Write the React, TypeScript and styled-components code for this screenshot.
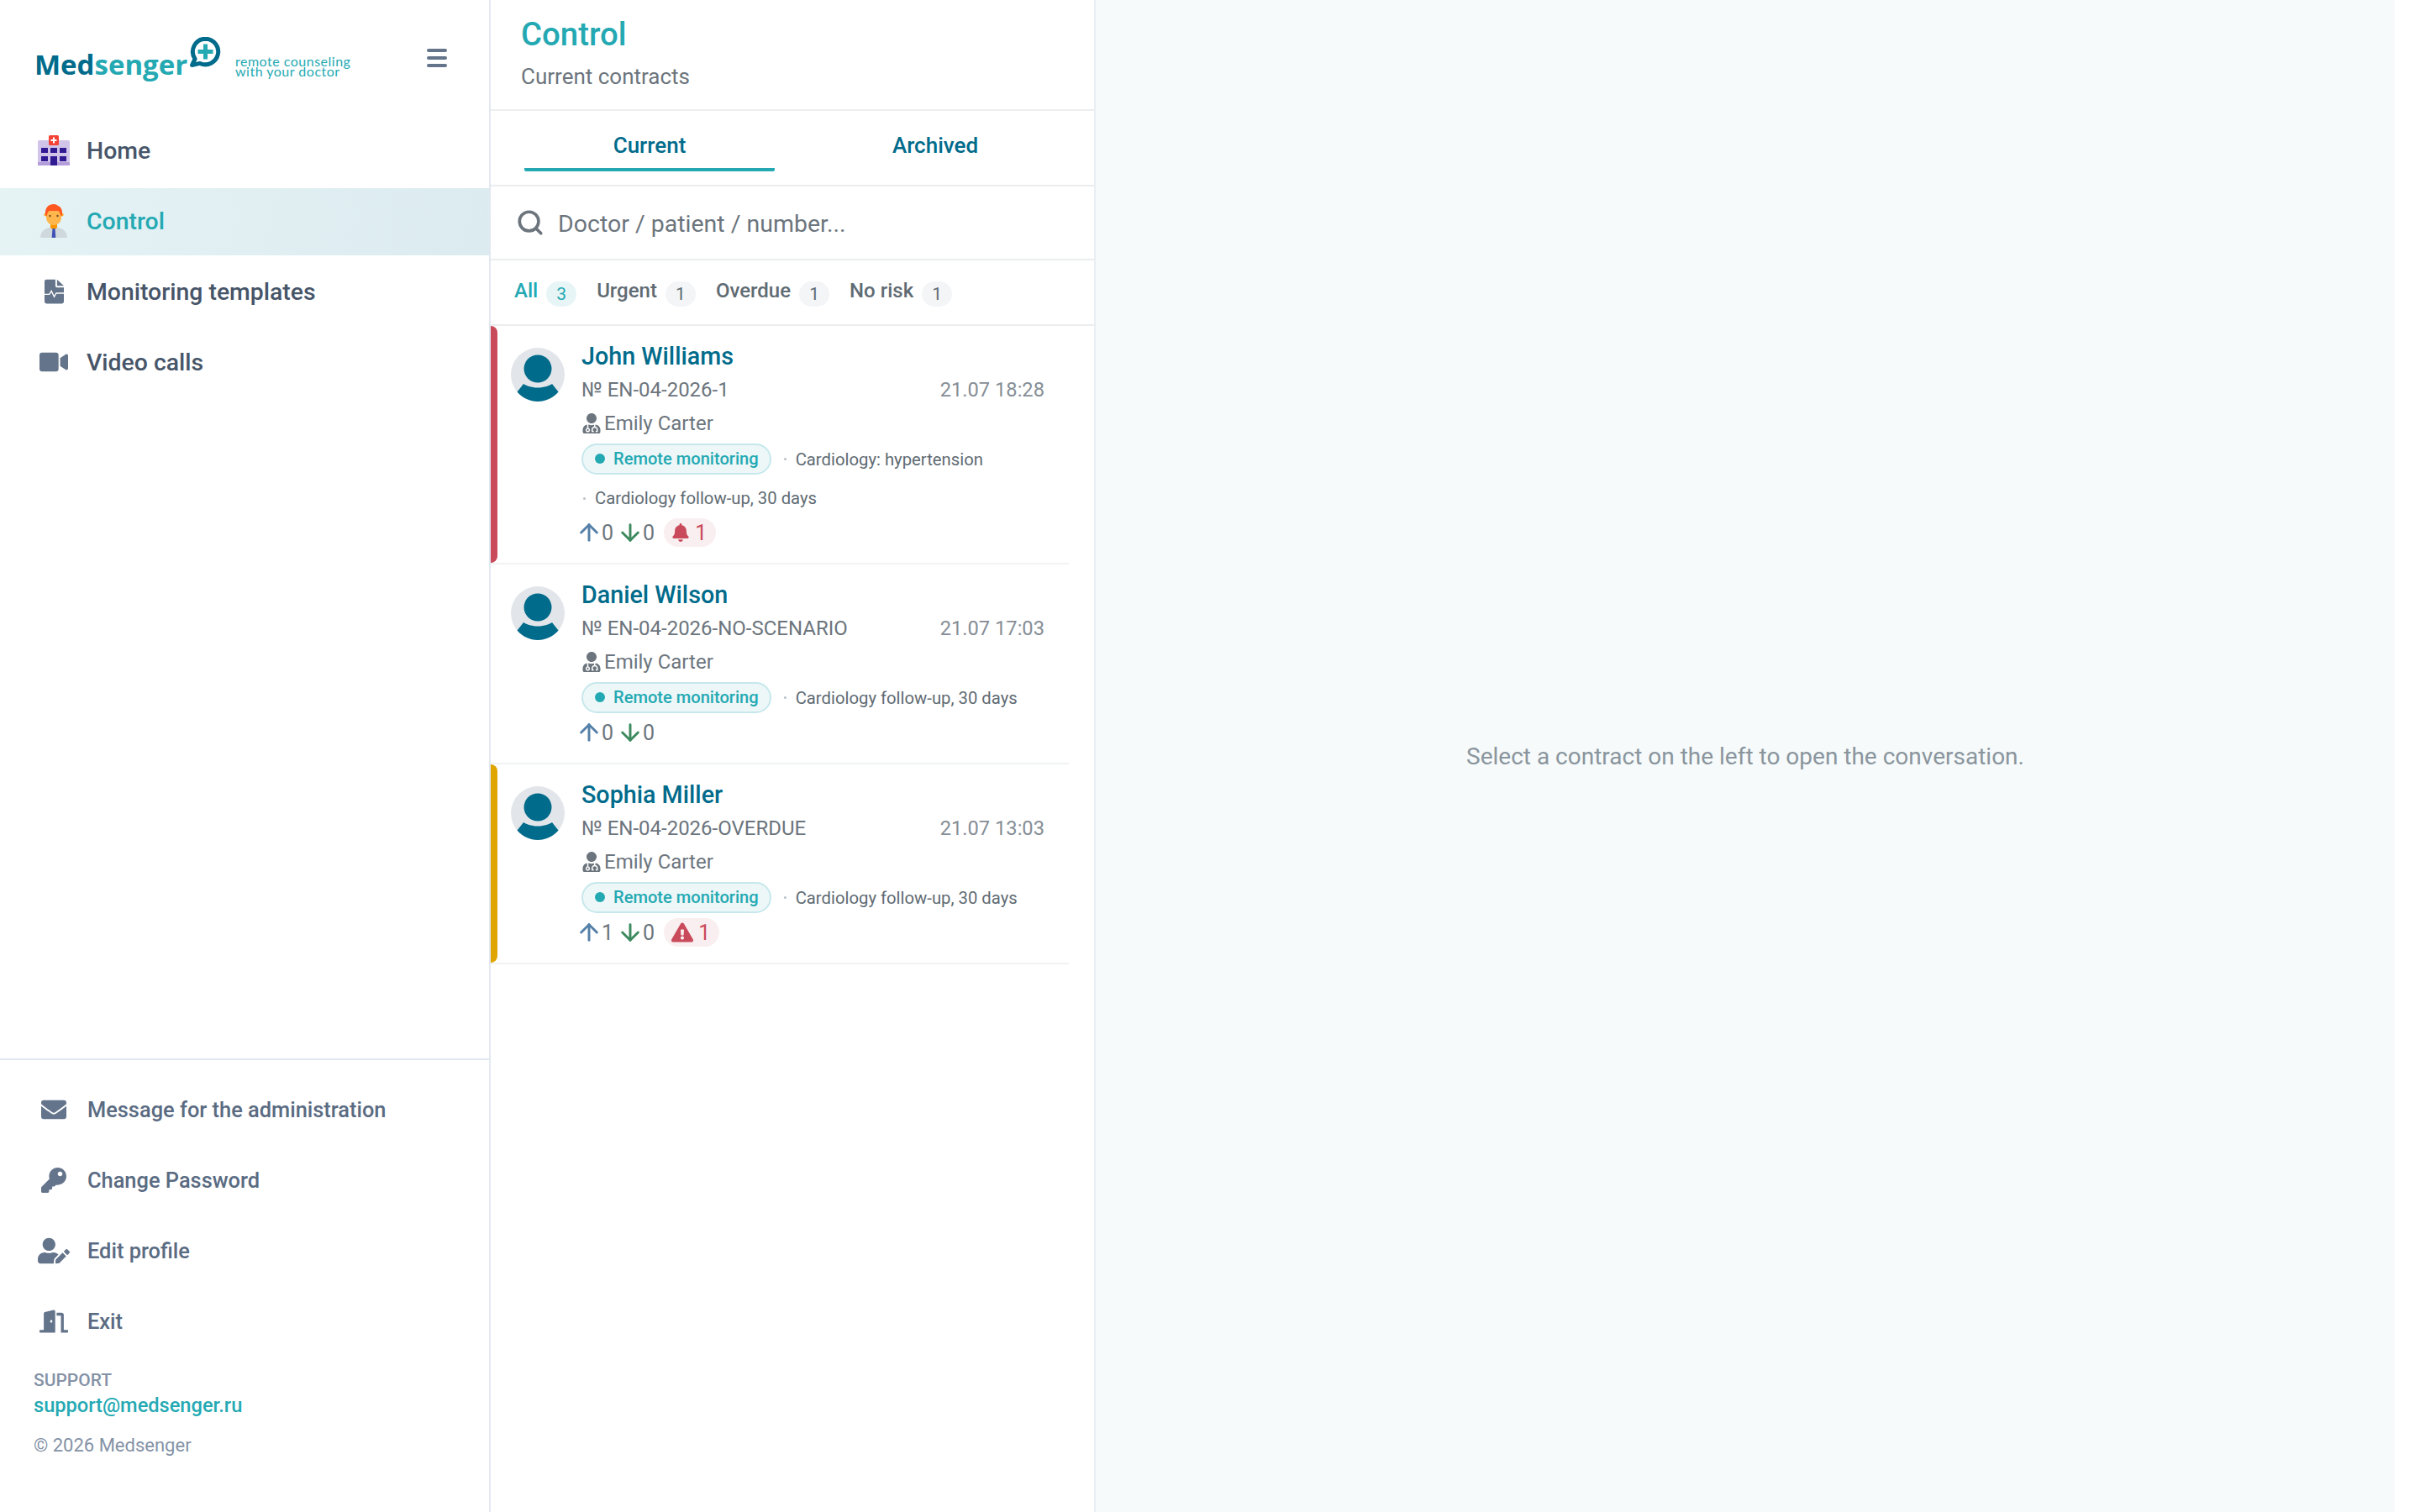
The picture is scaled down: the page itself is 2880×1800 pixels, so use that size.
import React from "react";
import styled, { createGlobalStyle } from "styled-components";
import { ArrowDown, ArrowUp, Search } from "lucide-react";
import {
  FaBell,
  FaDoorOpen,
  FaEnvelope,
  FaExclamationTriangle,
  FaKey,
  FaUserEdit,
  FaUserMd,
  FaVideo,
} from "react-icons/fa";

const TEAL = "#24a9b3";
const DEEP = "#006b8b";
const ROBOTO = `Roboto, "Liberation Sans", sans-serif`;

const Global = createGlobalStyle`
  html, body { margin: 0; padding: 0; background: #fff; overflow: hidden; }
  * { box-sizing: border-box; }
  body { font-family: ${ROBOTO}; }
`;

const Page = styled.div`
  display: flex;
  width: 2850px;
  height: 1800px;
`;

const Sidebar = styled.aside`
  width: 584px;
  flex: none;
  display: flex;
  flex-direction: column;
  background: #fff;
  border-right: 2px solid #e2e8f0;
`;

const SideHeader = styled.header`
  height: 140px;
  flex: none;
  display: flex;
  align-items: flex-start;
  padding: 44px 50px 0 41px;
`;

const Logo = styled.div`
  display: flex;
  align-items: flex-start;
`;

const LogoWord = styled.div`
  display: flex;
  font-family: "Open Sans", sans-serif;
  font-weight: 700;
  font-size: 33px;
  line-height: 40px;
  margin-top: 13px;
  width: 185px;
  white-space: nowrap;
`;

const LogoDark = styled.span`
  color: ${DEEP};
`;

const LogoLight = styled.span`
  color: ${TEAL};
`;

const LogoBubble = styled.svg`
  width: 37px;
  height: 37px;
  flex: none;
`;

const Tagline = styled.div`
  font-family: Lato, sans-serif;
  font-size: 16px;
  line-height: 12px;
  letter-spacing: 0.5px;
  color: ${TEAL};
  margin: 23px 0 0 17px;
  white-space: nowrap;
`;

const Burger = styled.button`
  margin: 14px 0 0 auto;
  width: 24px;
  height: 22px;
  padding: 0;
  border: none;
  background: none;
  display: flex;
  flex-direction: column;
  justify-content: space-between;
  span {
    display: block;
    height: 4px;
    border-radius: 2px;
    background: #64748b;
  }
`;

const Nav = styled.nav`
  display: flex;
  flex-direction: column;
  gap: 4px;
  flex: 1;
`;

const NavRow = styled.a<{ $active?: boolean }>`
  height: 80px;
  display: flex;
  align-items: center;
  gap: 19px;
  padding: 0 0 2px 44px;
  font-size: 28.4px;
  font-weight: 500;
  color: ${(p) => (p.$active ? TEAL : "#475569")};
  background: ${(p) => (p.$active ? "linear-gradient(100deg, #e5f3f5, #dcebf0)" : "none")};
`;

const IconSlot = styled.span`
  width: 40px;
  height: 40px;
  flex: none;
  display: flex;
  align-items: center;
  justify-content: center;
  color: #64748b;
`;

const Bottom = styled.div`
  flex: none;
  border-top: 2px solid #e2e8f0;
  padding: 29px 0 65px;
`;

const BottomLinks = styled.div`
  display: flex;
  flex-direction: column;
  gap: 24px;
`;

const BottomRow = styled.a`
  height: 60px;
  display: flex;
  align-items: center;
  gap: 20px;
  padding-left: 44px;
  font-size: 25.4px;
  font-weight: 500;
  color: #5a6b82;
`;

const SupportLabel = styled.div`
  margin: 26px 0 0 40px;
  font-size: 21px;
  line-height: 28px;
  font-weight: 500;
  color: #8492a6;
`;

const SupportMail = styled.a`
  display: block;
  margin-left: 40px;
  font-size: 23.6px;
  line-height: 32px;
  font-weight: 500;
  color: ${TEAL};
`;

const Copyright = styled.div`
  margin: 18px 0 0 40px;
  font-size: 22px;
  line-height: 28px;
  color: #8492a6;
`;

const ListPanel = styled.section`
  width: 720px;
  flex: none;
  display: flex;
  flex-direction: column;
  background: #fff;
  border-right: 2px solid #e9eef3;
`;

const PanelHead = styled.header`
  height: 132px;
  flex: none;
  padding: 17px 36px 0;
  border-bottom: 2px solid #ebedef;
`;

const Title = styled.h1`
  margin: 0;
  font-size: 38.4px;
  line-height: 48px;
  font-weight: 500;
  color: ${TEAL};
`;

const Subtitle = styled.div`
  margin-top: 8px;
  font-size: 26px;
  line-height: 36px;
  color: #6c757d;
`;

const Tabs = styled.div`
  height: 90px;
  flex: none;
  display: grid;
  grid-template-columns: 1fr 1fr;
  column-gap: 42px;
  padding: 0 40px;
  border-bottom: 2px solid #ebedef;
`;

const Tab = styled.div<{ $active?: boolean }>`
  height: 72px;
  padding-top: 23px;
  text-align: center;
  font-size: 26px;
  line-height: 36px;
  font-weight: 500;
  color: ${DEEP};
  border-bottom: 4px solid ${(p) => (p.$active ? TEAL : "transparent")};
  border-radius: 0 0 2px 2px;
`;

const SearchBar = styled.div`
  height: 88px;
  flex: none;
  display: flex;
  align-items: center;
  gap: 16px;
  padding-left: 30px;
  color: #6c757d;
  border-bottom: 2px solid #ebedef;
`;

const SearchInput = styled.input`
  flex: 1;
  border: none;
  outline: none;
  padding: 2px 0 0;
  background: none;
  font-family: ${ROBOTO};
  font-size: 28.5px;
  color: #6c757d;
  &::placeholder {
    color: #6c757d;
    opacity: 1;
  }
`;

const Filters = styled.div`
  height: 78px;
  flex: none;
  display: flex;
  align-items: center;
  gap: 24px;
  padding: 0 0 4px 28px;
  border-bottom: 2px solid #ebedef;
`;

const Filter = styled.div<{ $active?: boolean }>`
  display: flex;
  align-items: center;
  gap: 10px;
  font-size: 24px;
  font-weight: 500;
  color: ${(p) => (p.$active ? TEAL : "#5f6b73")};
`;

const Count = styled.span<{ $active?: boolean }>`
  width: 36px;
  height: 30px;
  margin-top: 7px;
  border-radius: 15px;
  display: flex;
  align-items: center;
  justify-content: center;
  font-size: 21px;
  font-weight: 400;
  background: ${(p) => (p.$active ? "#e8f5f7" : "#f3f5f7")};
  color: ${(p) => (p.$active ? TEAL : "#5f6b73")};
`;

const Card = styled.article`
  position: relative;
  display: flex;
  margin-right: 30px;
  padding: 18px 29px 19px 24px;
  border-bottom: 2px solid #f0f2f4;
`;

const RiskBar = styled.span<{ $color: string }>`
  position: absolute;
  left: 0;
  top: 0;
  bottom: 0;
  width: 8px;
  border-radius: 0 8px 8px 0;
  background: ${(p) => p.$color};
`;

const Avatar = styled.svg`
  width: 64px;
  height: 64px;
  flex: none;
  margin: 8px 20px 0 0;
`;

const CardBody = styled.div`
  flex: 1;
  min-width: 0;
`;

const Name = styled.div`
  font-size: 28.7px;
  line-height: 36px;
  font-weight: 500;
  color: ${DEEP};
`;

const NumberRow = styled.div`
  margin-top: 3px;
  display: flex;
  justify-content: space-between;
  font-size: 24px;
  line-height: 38px;
  color: #6c757d;
`;

const DateText = styled.span`
  font-size: 23.7px;
  color: #868e96;
`;

const Doctor = styled.div`
  margin-top: 2px;
  display: flex;
  align-items: center;
  gap: 3px;
  font-size: 24px;
  line-height: 38px;
  color: #6c757d;
`;

const Tags = styled.div`
  margin-top: 5px;
  display: flex;
  flex-wrap: wrap;
  align-items: center;
  column-gap: 13px;
  row-gap: 10px;
`;

const Chip = styled.span`
  height: 37px;
  display: inline-flex;
  align-items: center;
  gap: 10px;
  padding: 0 13px 2px 14px;
  border: 2px solid #c6e8ec;
  border-radius: 19px;
  background: #edf7f8;
  font-size: 20.1px;
  font-weight: 500;
  color: ${TEAL};
  &::before {
    content: "";
    width: 12px;
    height: 12px;
    border-radius: 50%;
    background: ${TEAL};
  }
`;

const Tag = styled.span`
  display: inline-flex;
  align-items: center;
  gap: 11px;
  padding-left: 2px;
  font-size: 20.3px;
  line-height: 36px;
  color: #5f6b73;
  &::before {
    content: "";
    width: 3px;
    height: 3px;
    border-radius: 50%;
    background: #b8c0c6;
  }
`;

const Metrics = styled.div`
  margin-top: 6px;
  height: 34px;
  display: flex;
  align-items: center;
  font-size: 25px;
  color: #6c757d;
`;

const Metric = styled.span<{ $color: string }>`
  display: inline-flex;
  align-items: center;
  gap: 6px;
  margin-right: 11px;
  svg {
    color: ${(p) => p.$color};
    margin: 0 -7px;
  }
`;

const Alert = styled.span`
  height: 34px;
  display: inline-flex;
  align-items: center;
  gap: 6px;
  padding: 0 11px 0 9px;
  border-radius: 17px;
  background: #f9eef0;
  color: #c94a5a;
`;

const Conversation = styled.main`
  flex: 1;
  display: flex;
  align-items: center;
  justify-content: center;
  background: #f6fafb;
  font-size: 28px;
  color: #8a959d;
`;

const HospitalIcon = () => (
  <svg width="38" height="36" viewBox="0 0 38 36">
    <path d="M2 6h34a2 2 0 0 1 2 2v28H0V8a2 2 0 0 1 2-2z" fill="#d1c4e9" />
    <rect y="32" width="38" height="4" fill="#b39ddb" />
    <rect x="13" width="12" height="12" rx="1.5" fill="#f44336" />
    <path d="M18 2.5h2V5h2.5v2H20v2.5h-2V7h-2.5V5H18z" fill="#fff" />
    <g fill="#311b92">
      <rect x="4" y="15" width="8" height="6" />
      <rect x="15" y="15" width="8" height="6" />
      <rect x="26" y="15" width="8" height="6" />
      <rect x="4" y="25" width="8" height="6" />
      <rect x="15" y="25" width="8" height="11" />
      <rect x="26" y="25" width="8" height="6" />
    </g>
  </svg>
);

const ManagerIcon = () => (
  <svg width="32" height="40" viewBox="0 0 32 40">
    <path d="M0 40c0-7 5-11 11-12h10c6 1 11 5 11 12z" fill="#cfd8dc" />
    <path d="M12 22h8v6l-4 3-4-3z" fill="#ff9800" />
    <path d="M14.5 29h3l.8 11h-4.6z" fill="#3f51b5" />
    <circle cx="6.4" cy="12.5" r="2" fill="#ffa726" />
    <circle cx="25.6" cy="12.5" r="2" fill="#ffa726" />
    <path d="M7 8h18v8c0 5-4 9-9 9s-9-4-9-9z" fill="#ffb74d" />
    <path d="M16 0c-6 0-10 4-10 10v3l2 1c0-3 1-5 3-6h10c2 1 3 3 3 6l2-1v-3c0-4-2-7-5-8 0 0-2-2-5-2z" fill="#ff5722" />
    <circle cx="11.5" cy="14" r="1.2" fill="#784719" />
    <circle cx="20.5" cy="14" r="1.2" fill="#784719" />
  </svg>
);

const TemplateIcon = () => (
  <svg width="23" height="30" viewBox="0 0 24 30" fill="#64748b">
    <path d="M2.500 0H13.500v8a2 2 0 0 0 2 2H24v17.500a2.500 2.500 0 0 1-2.500 2.500h-19A2.500 2.500 0 0 1 0 27.500v-25A2.500 2.500 0 0 1 2.500 0z" />
    <path d="M15.500 0 24 8h-8.500z" />
    <path d="M0 18.500h6l2.500-4 3.500 7 2.500-4.500H24" fill="none" stroke="#fff" strokeWidth="1.500" />
  </svg>
);

const AvatarArt = () => (
  <Avatar viewBox="0 0 64 64">
    <circle cx="32" cy="32" r="32" fill="#e2e6ea" />
    <ellipse cx="32" cy="25" rx="16.5" ry="16.5" fill={DEEP} />
    <path d="M7.5 52.5 15 43c3 2 9 4.500 17 4.500S46 45 49 43l7.500 9.500C50 60 41 64 32 64S14 60 7.500 52.500z" fill={DEEP} />
  </Avatar>
);

type CardData = {
  name: string;
  number: string;
  date: string;
  tags: string[];
  up: number;
  risk?: string;
  alert?: "bell" | "warn";
};

const cards: CardData[] = [
  {
    name: "John Williams",
    number: "№ EN-04-2026-1",
    date: "21.07 18:28",
    tags: ["Cardiology: hypertension", "Cardiology follow-up, 30 days"],
    up: 0,
    risk: "#c94a5a",
    alert: "bell",
  },
  {
    name: "Daniel Wilson",
    number: "№ EN-04-2026-NO-SCENARIO",
    date: "21.07 17:03",
    tags: ["Cardiology follow-up, 30 days"],
    up: 0,
  },
  {
    name: "Sophia Miller",
    number: "№ EN-04-2026-OVERDUE",
    date: "21.07 13:03",
    tags: ["Cardiology follow-up, 30 days"],
    up: 1,
    risk: "#dfa500",
    alert: "warn",
  },
];

const filters = [
  { label: "All", count: 3, active: true },
  { label: "Urgent", count: 1 },
  { label: "Overdue", count: 1 },
  { label: "No risk", count: 1 },
];

export default function App() {
  return (
    <>
      <Global />
      <Page>
        <Sidebar>
          <SideHeader>
            <Logo>
              <LogoWord>
                <LogoDark>Med</LogoDark>
                <LogoLight>senger</LogoLight>
              </LogoWord>
              <LogoBubble viewBox="0 0 37 37">
                <path
                  d="M19 3.200a15.300 15.300 0 1 1-6.500 29.200L3 34.500l3.600-7.400A15.300 15.300 0 0 1 19 3.200z"
                  transform="translate(-.5 -1)"
                  fill="#fff"
                  stroke={DEEP}
                  strokeWidth="5"
                  strokeLinejoin="round"
                />
                <path d="M16 8.500h5V15h6.500v5H21v6.500h-5V20H9.500v-5H16z" fill={TEAL} />
              </LogoBubble>
              <Tagline>
                remote counseling
                <br />
                with your doctor
              </Tagline>
            </Logo>
            <Burger aria-label="Menu">
              <span />
              <span />
              <span />
            </Burger>
          </SideHeader>
          <Nav>
            <NavRow>
              <IconSlot>
                <HospitalIcon />
              </IconSlot>
              Home
            </NavRow>
            <NavRow $active>
              <IconSlot>
                <ManagerIcon />
              </IconSlot>
              Control
            </NavRow>
            <NavRow>
              <IconSlot>
                <TemplateIcon />
              </IconSlot>
              Monitoring templates
            </NavRow>
            <NavRow>
              <IconSlot>
                <FaVideo size={34} />
              </IconSlot>
              Video calls
            </NavRow>
          </Nav>
          <Bottom>
            <BottomLinks>
              <BottomRow>
                <IconSlot>
                  <FaEnvelope size={30} />
                </IconSlot>
                Message for the administration
              </BottomRow>
              <BottomRow>
                <IconSlot>
                  <FaKey size={30} />
                </IconSlot>
                Change Password
              </BottomRow>
              <BottomRow>
                <IconSlot>
                  <FaUserEdit size={38} />
                </IconSlot>
                Edit profile
              </BottomRow>
              <BottomRow>
                <IconSlot>
                  <FaDoorOpen size={34} />
                </IconSlot>
                Exit
              </BottomRow>
            </BottomLinks>
            <SupportLabel>SUPPORT</SupportLabel>
            <SupportMail>support@medsenger.ru</SupportMail>
            <Copyright>© 2026 Medsenger</Copyright>
          </Bottom>
        </Sidebar>

        <ListPanel>
          <PanelHead>
            <Title>Control</Title>
            <Subtitle>Current contracts</Subtitle>
          </PanelHead>
          <Tabs>
            <Tab $active>Current</Tab>
            <Tab>Archived</Tab>
          </Tabs>
          <SearchBar>
            <Search size={34} strokeWidth={2.6} />
            <SearchInput placeholder="Doctor / patient / number..." />
          </SearchBar>
          <Filters>
            {filters.map((f) => (
              <Filter key={f.label} $active={f.active}>
                {f.label}
                <Count $active={f.active}>{f.count}</Count>
              </Filter>
            ))}
          </Filters>
          {cards.map((c) => (
            <Card key={c.name}>
              {c.risk && <RiskBar $color={c.risk} />}
              <AvatarArt />
              <CardBody>
                <Name>{c.name}</Name>
                <NumberRow>
                  <span>{c.number}</span>
                  <DateText>{c.date}</DateText>
                </NumberRow>
                <Doctor>
                  <FaUserMd size={24} />
                  Emily Carter
                </Doctor>
                <Tags>
                  <Chip>Remote monitoring</Chip>
                  {c.tags.map((t) => (
                    <Tag key={t}>{t}</Tag>
                  ))}
                </Tags>
                <Metrics>
                  <Metric $color="#5580a8">
                    <ArrowUp size={32} strokeWidth={2.2} />
                    {c.up}
                  </Metric>
                  <Metric $color="#3d8a5f">
                    <ArrowDown size={32} strokeWidth={2.2} />0
                  </Metric>
                  {c.alert && (
                    <Alert>
                      {c.alert === "bell" ? <FaBell size={22} /> : <FaExclamationTriangle size={26} />}1
                    </Alert>
                  )}
                </Metrics>
              </CardBody>
            </Card>
          ))}
        </ListPanel>

        <Conversation>Select a contract on the left to open the conversation.</Conversation>
      </Page>
    </>
  );
}
